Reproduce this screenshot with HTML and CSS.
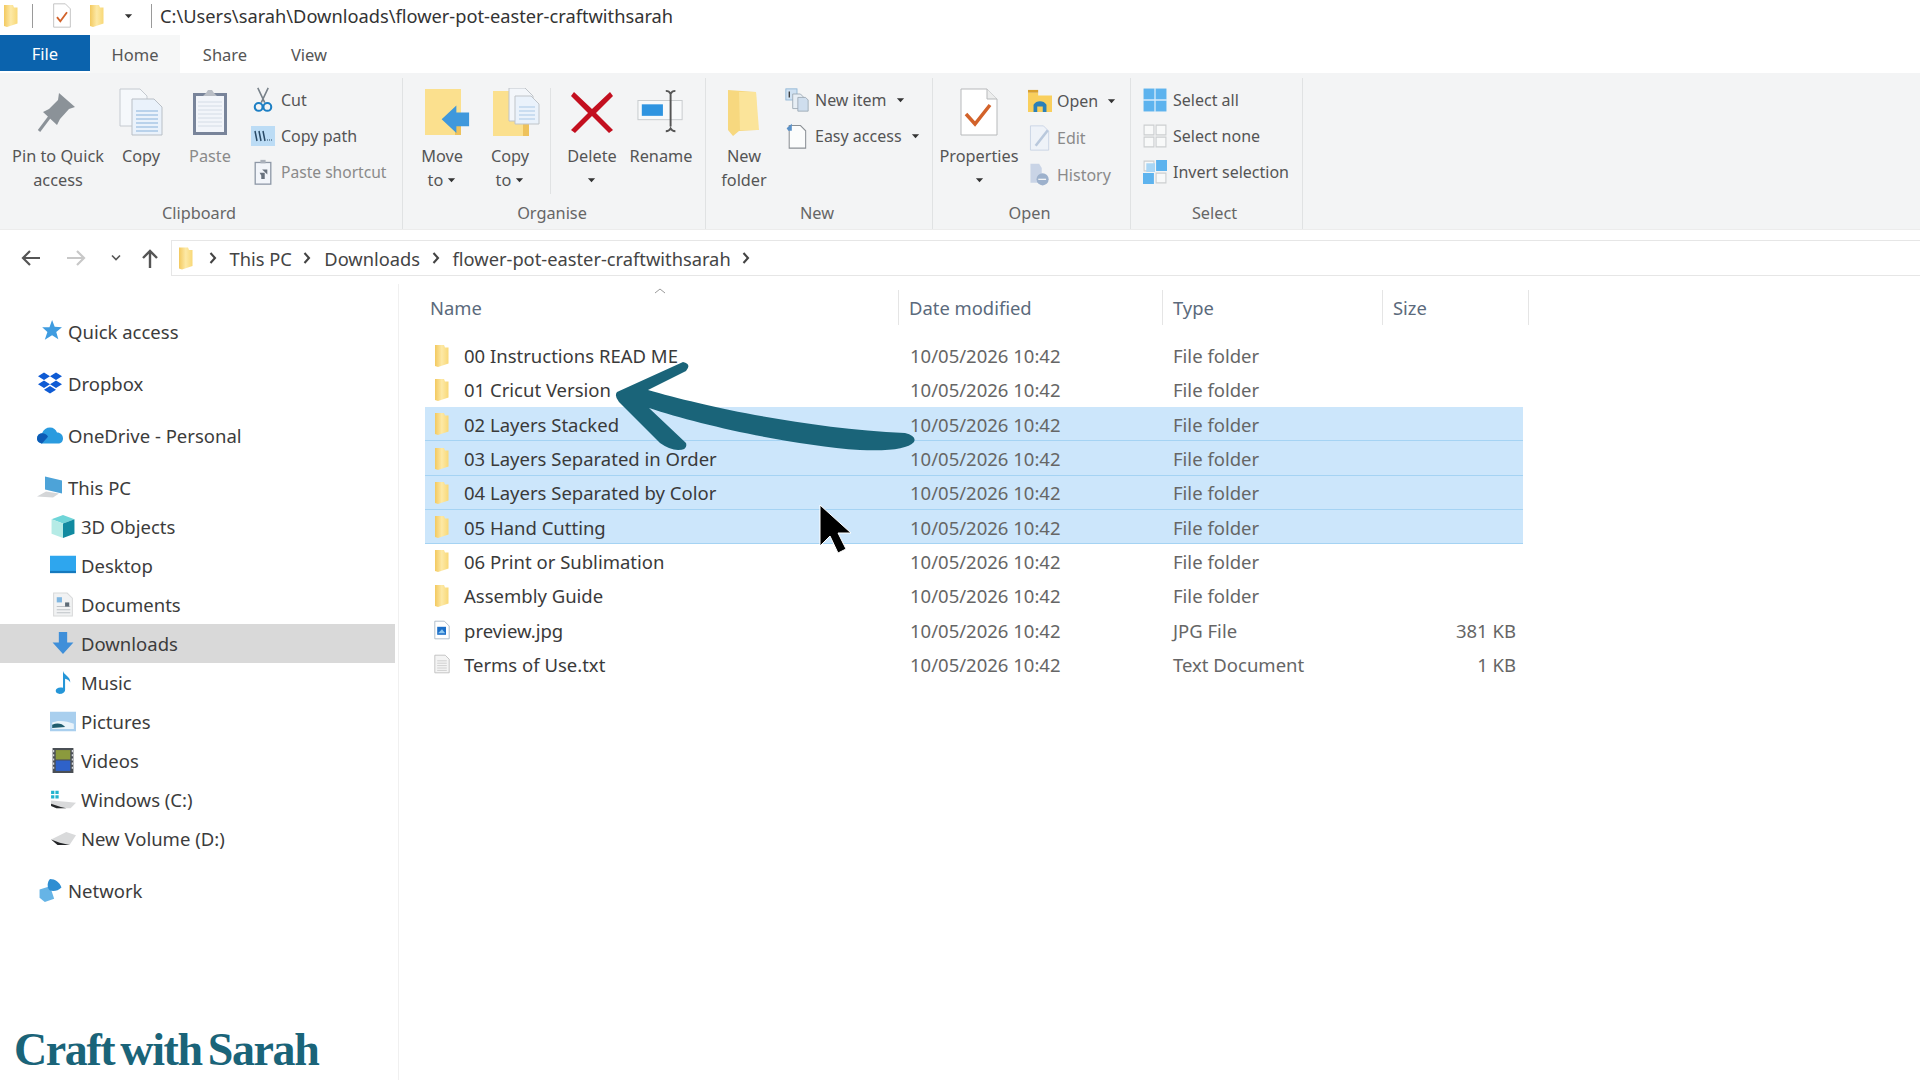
FILE: index.html
```html
<!DOCTYPE html>
<html lang="en">
<head>
  <meta charset="UTF-8" />
  <title>flower-pot-easter-craftwithsarah</title>
  <link rel="stylesheet" href="styles.css">
</head>
<body>

  <svg class="defs" width="0" height="0">
    <defs>
      <linearGradient id="g-folder" x1="0" x2="1" y1="0" y2="0">
        <stop offset="0" stop-color="#f3c95f"/><stop offset=".5" stop-color="#fde9a6"/><stop offset="1" stop-color="#f8d877"/>
      </linearGradient>
      <symbol id="i-folder" viewBox="0 0 16 24">
        <path d="M1 1h9l1 2.500h3.500v16L4 23l-3-1z" fill="url(#g-folder)"/>
      </symbol>
      <symbol id="i-down" viewBox="0 0 10 6"><path d="M1 1h8l-4 4.500z" fill="#333"/></symbol>
      <symbol id="i-check" viewBox="0 0 24 30">
        <path d="M2 1h14l6 6v22H2z" fill="#fff" stroke="#b9b9b9"/>
        <path d="M6 17l4 5 8-11" fill="none" stroke="#d2622a" stroke-width="2.200"/>
      </symbol>
      <symbol id="i-chev" viewBox="0 0 8 14"><path d="M1.500 2l4.500 5-4.500 5" fill="none" stroke="#444" stroke-width="2.100"/></symbol>
      <symbol id="i-star" viewBox="0 0 24 24"><path d="M14 1l2.500 6.500 7 .5-5.500 4.500 2 7-6-3.800-7 4.200 2.500-7.400-5-4.500h7z" fill="#3f9ce0"/></symbol>
      <symbol id="i-dropbox" viewBox="0 0 26 24">
        <path d="M7 1l6 3.800-6 3.800-6-3.800zM19 1l6 3.800-6 3.800-6-3.800zM7 9l6 3.800-6 3.800-6-3.800zM19 9l6 3.800-6 3.800-6-3.800zM13 14.500l6 3.700-6 3.800-6-3.800z" fill="#0f5bd4"/>
      </symbol>
      <symbol id="i-cloud" viewBox="0 0 26 18">
        <path d="M6 17C2 17 0 14.500 0 12c0-3 2-5 5-5.200C6.500 3 9.500 1 13 1c3.500 0 6 2 7 5 3.500 0 6 2.500 6 6 0 3-2 5-5 5z" fill="#2a9bdf"/>
        <path d="M6 17C2 17 0 14.500 0 12c0-3 2-5 5-5.200 3 0 5 1.500 6 3.500L5 17z" fill="#0d5bb5"/>
      </symbol>
      <symbol id="i-pc" viewBox="0 0 26 24">
        <path d="M8 1l17 4v13L8 14z" fill="#4da3d8"/>
        <path d="M0 21l9-5 13 2-6 4z" fill="#d4d6d8"/>
      </symbol>
      <symbol id="i-3d" viewBox="0 0 24 24">
        <path d="M12 1l11 4-11 4L1 5z" fill="#6fd5d8"/>
        <path d="M1 5l11 4v14L1 19z" fill="#b5ebe6"/>
        <path d="M12 9l11-4v14l-11 4z" fill="#118aa0"/>
      </symbol>
      <symbol id="i-desktop" viewBox="0 0 24 18">
        <rect width="24" height="16" fill="#2ea6ee"/><rect y="14" width="24" height="2" fill="#1679bd"/>
      </symbol>
      <symbol id="i-doc" viewBox="0 0 20 24">
        <path d="M1 1h13l5 5v17H1z" fill="#f1f2f3" stroke="#d8d9da"/>
        <path d="M4 5h5v5H4z" fill="#7fb6e0"/><path d="M4 14h13M4 17h13M4 20h13" stroke="#bfc3c7"/><path d="M12 10h4v4h-4z" fill="#5d6a75"/>
      </symbol>
      <symbol id="i-dl" viewBox="0 0 22 24"><path d="M7 1h8v10h6L11 22 1 11h6z" fill="#3f8fd9"/></symbol>
      <symbol id="i-music" viewBox="0 0 18 24">
        <path d="M9 1c1 4 7 5 7 11-1-2-3-3-5-3.500V19c0 2.500-2.500 4-5 4s-4-1.500-4-3c0-2.500 3-4 7-3z" fill="#2596d8"/>
      </symbol>
      <symbol id="i-pic" viewBox="0 0 24 18">
        <rect width="24" height="18" fill="#a9cfee"/><path d="M2 10c6-3 14-1 20 1v5H2z" fill="#e9f3fa"/><path d="M2 12c5-2 9-1 12 2l-12 1z" fill="#1f5c6e"/>
      </symbol>
      <symbol id="i-vid" viewBox="0 0 20 24">
        <rect width="20" height="24" fill="#4a4f55"/><rect x="3" y="2" width="14" height="9" fill="#8b9a3d"/><rect x="3" y="12" width="14" height="10" fill="#2f62c9"/>
        <path d="M1 2v20M19 2v20" stroke="#d5d8dc" stroke-width="1.200" stroke-dasharray="2 2"/>
      </symbol>
      <symbol id="i-win" viewBox="0 0 24 18">
        <path d="M1 1h3v3H1zM5 1h3v3H5zM1 5h3v3H1zM5 5h3v3H5z" fill="#23b4cf"/>
        <path d="M1 10l14 1 9 1-5 5H6l-5-2z" fill="#d9dadb"/><path d="M1 13l9 3 5 1H6l-5-2z" fill="#26282a"/>
      </symbol>
      <symbol id="i-vol" viewBox="0 0 24 14">
        <path d="M1 8l14-7 9 3-6 9H7z" fill="#d9dadb"/><path d="M1 8l8 3 9 2H7z" fill="#222426"/>
      </symbol>
      <symbol id="i-net" viewBox="0 0 24 24">
        <path d="M2 11l10-3 4 12-9 3-5-4z" fill="#66b4e6"/><path d="M12 1c5 0 9 3 11 8-3 3-7 4-11 3-3-2-3-8 0-11z" fill="#2e8ed2"/>
      </symbol>
      <symbol id="i-jpg" viewBox="0 0 20 24">
        <path d="M1 1h12l6 6v16H1z" fill="#fff" stroke="#9fb0bf"/><rect x="4" y="8" width="11" height="10" fill="#1c6fc8"/><path d="M5 16l5-5 4 5z" fill="#8fc8f0"/>
      </symbol>
      <symbol id="i-txt" viewBox="0 0 20 24">
        <path d="M1 1h13l5 5v17H1z" fill="#f4f4f4" stroke="#b9b9b9"/>
        <path d="M4 8h12M4 11h12M4 14h12M4 17h12M4 20h12" stroke="#c6c6c6"/>
      </symbol>

      <symbol id="r-pin" viewBox="0 0 48 48">
        <path d="M25 5l16 14-6 2-9 10-3 6-14-13 6-3 9-9z" fill="#8b9298"/>
        <path d="M17 27L5 43" stroke="#8b9298" stroke-width="3"/>
      </symbol>
      <symbol id="r-copy" viewBox="0 0 48 48">
        <path d="M3 1h20l7 7v30H3z" fill="#f5f8fb" stroke="#c5cad0"/>
        <path d="M15 11h22l8 8v28H15z" fill="#eaf2fb" stroke="#b9bfc6"/>
        <path d="M19 23h22M19 27h22M19 31h22M19 35h22M19 39h22M19 43h22" stroke="#a9c8e6" stroke-width="1.500"/>
      </symbol>
      <symbol id="r-paste" viewBox="0 0 48 48">
        <rect x="7" y="5" width="34" height="42" fill="#78849a"/><rect x="10" y="8" width="28" height="36" fill="#f2f5fa"/>
        <path d="M12 14h24M12 18h24M12 22h24M12 26h24M12 30h24M12 34h24M12 38h24" stroke="#d4dce6"/>
        <path d="M17 8l3-3 2-3h4l2 3 3 3z" fill="#b9bec6"/>
      </symbol>
      <symbol id="r-move" viewBox="0 0 48 48">
        <rect x="0" y="1" width="36" height="46" fill="#fbe08e"/><rect x="30" y="32" width="6" height="15" fill="#eec25c"/>
        <path d="M17 36l15-14v7h13v14H32v7z" fill="#3f98dc" transform="translate(0 -4) scale(.98)"/>
      </symbol>
      <symbol id="r-copyto" viewBox="0 0 48 48">
        <rect x="0" y="3" width="36" height="45" fill="#fbe08e"/><rect x="30" y="30" width="6" height="18" fill="#eec25c"/>
        <path d="M16 0h16l8 8v25H16z" fill="#f3f6fa" stroke="#bfc4c9"/>
        <path d="M22 8h16l8 8v20H22z" fill="#eaf2fb" stroke="#bfc4c9"/>
        <path d="M26 19h16M26 23h16M26 27h16M26 31h16" stroke="#a9c8e6"/>
      </symbol>
      <symbol id="r-x" viewBox="0 0 48 48">
        <path d="M6 4l18 17L42 4l3 4-17 17 17 17-4 3-17-17L7 45l-4-3 17-17L3 8z" fill="#c30f1f"/>
      </symbol>
      <symbol id="r-rename" viewBox="0 0 50 48">
        <rect x="1" y="12" width="46" height="20" fill="#f8f9fa" stroke="#c7cacd"/>
        <rect x="5" y="16" width="22" height="12" fill="#2f94e0"/>
        <path d="M30 2c2 0 4 1 5 3 1-2 3-3 5-3M35 5v34M30 44c2 0 4-1 5-3 1 2 3 3 5 3" fill="none" stroke="#555" stroke-width="2"/>
      </symbol>
      <symbol id="r-newfolder" viewBox="0 0 36 48">
        <path d="M2 2l28 2 1 38-18 1-6 5-5-6z" fill="#f7d87f"/>
        <path d="M13 4h17l3 38H14z" fill="#fbe49a"/>
      </symbol>
      <symbol id="r-props" viewBox="0 0 40 48">
        <path d="M2 1h26l10 10v36H2z" fill="#fff" stroke="#b7b9bb"/><path d="M28 1v10h10" fill="#eceded" stroke="#b7b9bb"/>
        <path d="M7 26l9 10L31 17" fill="none" stroke="#d2622a" stroke-width="3.500"/>
      </symbol>

      <symbol id="s-cut" viewBox="0 0 24 30">
        <path d="M6 1l8 17M18 1l-8 17" stroke="#778089" stroke-width="1.800" fill="none"/>
        <circle cx="7" cy="23" r="4.500" fill="none" stroke="#1d7fc4" stroke-width="2.400"/><circle cx="17" cy="23" r="4.500" fill="none" stroke="#1d7fc4" stroke-width="2.400"/>
      </symbol>
      <symbol id="s-path" viewBox="0 0 24 20">
        <rect width="24" height="20" fill="#bcdcf5"/><path d="M4 5l2 10M8 5l2 10M12 5l2 10" stroke="#2a4a66" stroke-width="1.500"/><path d="M16 14h1M18 14h1M20 14h1" stroke="#2a4a66"/>
      </symbol>
      <symbol id="s-short" viewBox="0 0 20 30">
        <rect x="1" y="4" width="18" height="25" fill="#f2f5fa" stroke="#8d97a6" stroke-width="1.500"/><path d="M7 1h6v4H7z" fill="#aab1bb"/><path d="M6 16h6v7H8v-4z" fill="#69727e"/><path d="M9 12h6v6z" fill="#69727e"/>
      </symbol>
      <symbol id="s-new" viewBox="0 0 28 28">
        <rect x="1" y="1" width="13" height="13" fill="#cfe1f2" stroke="#8fb5d6"/><path d="M5 4v7" stroke="#333" stroke-width="1.500"/>
        <path d="M9 7h9l4 4v13H9z" fill="#e7eef5" stroke="#9aa7b3"/><path d="M15 11h9l3 3v13H15z" fill="#cfdeee" stroke="#9aa7b3"/>
      </symbol>
      <symbol id="s-easy" viewBox="0 0 24 30">
        <path d="M3 3h13l6 6v20H3z" fill="#fbfcfc" stroke="#8b9095" stroke-width="1.200"/><path d="M0 6l6-5v8H2z" fill="#5a91c8"/>
      </symbol>
      <symbol id="s-open" viewBox="0 0 26 24">
        <path d="M0 3h11v3h15v18H0z" fill="#f9cf5d"/><rect y="0" width="11" height="3" fill="#d9a02e"/>
        <path d="M6 24v-8c3-5 11-5 14 0v8h-4v-6h-6v6z" fill="#2a7fb8"/>
      </symbol>
      <symbol id="s-edit" viewBox="0 0 24 30">
        <path d="M1 1h15l6 6v22H1z" fill="#eef2f8" stroke="#c6d2e3"/><path d="M7 24L21 6" stroke="#b9c8dc" stroke-width="3"/>
      </symbol>
      <symbol id="s-hist" viewBox="0 0 24 30">
        <path d="M1 2h10l3 5v17H1z" fill="#c9d4e6"/><circle cx="15" cy="20" r="7" fill="#9db1cc"/><path d="M10 20h9" stroke="#f3f4f5" stroke-width="1.500"/>
      </symbol>
      <symbol id="s-all" viewBox="0 0 22 22">
        <rect x=".5" y=".5" width="21" height="21" fill="#5db3ee"/><path d="M11 0v22M0 11h22" stroke="#d8ecfb" stroke-width="1.200"/>
      </symbol>
      <symbol id="s-none" viewBox="0 0 22 22">
        <path d="M1 1h9v9H1zM12 1h9v9h-9zM1 12h9v9H1zM12 12h9v9h-9z" fill="#f8f9f9" stroke="#ccced0"/>
      </symbol>
      <symbol id="s-inv" viewBox="0 0 22 22">
        <path d="M12 0h10v10H12zM0 12h10v10H0z" fill="#5db3ee"/><path d="M1 1h9v9H1zM12 12h9v9h-9z" fill="#f8f9f9" stroke="#ccced0"/><path d="M3 3h8v8H3z" fill="#a9d6f5"/>
      </symbol>
    </defs>
  </svg>

  <div class="titlebar">
    <svg class="qa-folder"><use href="#i-folder"/></svg>
    <span class="qa-sep"></span>
    <svg class="qa-check"><use href="#i-check"/></svg>
    <svg class="qa-folder2"><use href="#i-folder"/></svg>
    <svg class="qa-down"><use href="#i-down"/></svg>
    <span class="qa-sep2"></span>
    <span class="title-path">C:\Users\sarah\Downloads\flower-pot-easter-craftwithsarah</span>
  </div>

  <div class="tabs">
    <div class="tab tab-file">File</div>
    <div class="tab tab-home">Home</div>
    <div class="tab tab-share">Share</div>
    <div class="tab tab-view">View</div>
  </div>

  <div class="ribbon">
    <section class="group group-clipboard">
      <div class="group-body">
        <div class="big w-pin"><svg class="big-icon"><use href="#r-pin"/></svg><span>Pin to Quick<br>access</span></div>
        <div class="big w-copy"><svg class="big-icon"><use href="#r-copy"/></svg><span>Copy</span></div>
        <div class="big w-paste muted"><svg class="big-icon"><use href="#r-paste"/></svg><span>Paste</span></div>
        <div class="stack stack-clip">
          <div class="small"><svg><use href="#s-cut"/></svg>Cut</div>
          <div class="small"><svg><use href="#s-path"/></svg>Copy path</div>
          <div class="small muted"><svg><use href="#s-short"/></svg><span class="short-text">Paste shortcut</span></div>
        </div>
      </div>
      <div class="group-label">Clipboard</div>
    </section>

    <section class="group group-organise">
      <div class="group-body">
        <div class="big w-move"><svg class="big-icon"><use href="#r-move"/></svg><span>Move<br>to <svg class="caret"><use href="#i-down"/></svg></span></div>
        <div class="big w-copyto"><svg class="big-icon"><use href="#r-copyto"/></svg><span>Copy<br>to <svg class="caret"><use href="#i-down"/></svg></span></div>
        <span class="inner-sep"></span>
        <div class="big w-delete"><svg class="big-icon"><use href="#r-x"/></svg><span>Delete<br><svg class="caret"><use href="#i-down"/></svg></span></div>
        <div class="big w-rename"><svg class="big-icon"><use href="#r-rename"/></svg><span>Rename</span></div>
      </div>
      <div class="group-label">Organise</div>
    </section>

    <section class="group group-new">
      <div class="group-body">
        <div class="big w-newfolder"><svg class="big-icon"><use href="#r-newfolder"/></svg><span>New<br>folder</span></div>
        <div class="stack stack-new">
          <div class="small"><svg><use href="#s-new"/></svg>New item <svg class="caret"><use href="#i-down"/></svg></div>
          <div class="small"><svg><use href="#s-easy"/></svg>Easy access <svg class="caret"><use href="#i-down"/></svg></div>
        </div>
      </div>
      <div class="group-label">New</div>
    </section>

    <section class="group group-open">
      <div class="group-body">
        <div class="big w-props"><svg class="big-icon"><use href="#r-props"/></svg><span>Properties<br><svg class="caret"><use href="#i-down"/></svg></span></div>
        <div class="stack stack-open">
          <div class="small"><svg><use href="#s-open"/></svg>Open <svg class="caret"><use href="#i-down"/></svg></div>
          <div class="small muted"><svg><use href="#s-edit"/></svg>Edit</div>
          <div class="small muted"><svg><use href="#s-hist"/></svg>History</div>
        </div>
      </div>
      <div class="group-label">Open</div>
    </section>

    <section class="group group-select">
      <div class="group-body">
        <div class="stack stack-select">
          <div class="small"><svg><use href="#s-all"/></svg>Select all</div>
          <div class="small"><svg><use href="#s-none"/></svg>Select none</div>
          <div class="small"><svg><use href="#s-inv"/></svg>Invert selection</div>
        </div>
      </div>
      <div class="group-label">Select</div>
    </section>
  </div>

  <div class="navbar">
    <div class="nav-buttons">
      <svg class="nav-back" viewBox="0 0 20 18"><path d="M20 9H3M10 2L3 9l7 7" fill="none" stroke="#555" stroke-width="2.200"/></svg>
      <svg class="nav-fwd" viewBox="0 0 20 18"><path d="M0 9h17M10 2l7 7-7 7" fill="none" stroke="#c8c8c8" stroke-width="2.200"/></svg>
      <svg class="nav-drop" viewBox="0 0 12 8"><path d="M2 1.500l4 4 4-4" fill="none" stroke="#555" stroke-width="1.600"/></svg>
      <svg class="nav-up" viewBox="0 0 18 20"><path d="M9 20V3M2 10l7-7 7 7" fill="none" stroke="#555" stroke-width="2.400"/></svg>
    </div>
    <div class="address">
      <svg class="addr-folder"><use href="#i-folder"/></svg>
      <svg class="chev"><use href="#i-chev"/></svg><span>This PC</span>
      <svg class="chev"><use href="#i-chev"/></svg><span>Downloads</span>
      <svg class="chev"><use href="#i-chev"/></svg><span>flower-pot-easter-craftwithsarah</span>
      <svg class="chev"><use href="#i-chev"/></svg>
    </div>
  </div>

  <div class="content">
    <aside class="sidebar">
      <ul class="tree">
        <li class="lvl1"><svg><use href="#i-star"/></svg>Quick access</li>
        <li class="lvl1 gap"><svg><use href="#i-dropbox"/></svg>Dropbox</li>
        <li class="lvl1 gap"><svg><use href="#i-cloud"/></svg>OneDrive - Personal</li>
        <li class="lvl1 gap"><svg><use href="#i-pc"/></svg>This PC</li>
        <li class="lvl2"><svg><use href="#i-3d"/></svg>3D Objects</li>
        <li class="lvl2"><svg><use href="#i-desktop"/></svg>Desktop</li>
        <li class="lvl2"><svg><use href="#i-doc"/></svg>Documents</li>
        <li class="lvl2 current"><svg><use href="#i-dl"/></svg>Downloads</li>
        <li class="lvl2"><svg><use href="#i-music"/></svg>Music</li>
        <li class="lvl2"><svg><use href="#i-pic"/></svg>Pictures</li>
        <li class="lvl2"><svg><use href="#i-vid"/></svg>Videos</li>
        <li class="lvl2"><svg><use href="#i-win"/></svg>Windows (C:)</li>
        <li class="lvl2"><svg><use href="#i-vol"/></svg>New Volume (D:)</li>
        <li class="lvl1 gap"><svg><use href="#i-net"/></svg>Network</li>
      </ul>
    </aside>

    <main class="files">
      <div class="file-head">
        <div class="col-name">Name<svg class="sort" viewBox="0 0 12 6"><path d="M1 5l5-4 5 4" fill="none" stroke="#9a9a9a"/></svg></div>
        <div class="col-date">Date modified</div>
        <div class="col-type">Type</div>
        <div class="col-size">Size</div>
      </div>
      <div class="row"><svg><use href="#i-folder"/></svg><span class="name">00 Instructions READ ME</span><span>10/05/2026 10:42</span><span>File folder</span><span class="size"></span></div>
      <div class="row"><svg><use href="#i-folder"/></svg><span class="name">01 Cricut Version</span><span>10/05/2026 10:42</span><span>File folder</span><span class="size"></span></div>
      <div class="row selected"><svg><use href="#i-folder"/></svg><span class="name">02 Layers Stacked</span><span>10/05/2026 10:42</span><span>File folder</span><span class="size"></span></div>
      <div class="row selected"><svg><use href="#i-folder"/></svg><span class="name">03 Layers Separated in Order</span><span>10/05/2026 10:42</span><span>File folder</span><span class="size"></span></div>
      <div class="row selected"><svg><use href="#i-folder"/></svg><span class="name">04 Layers Separated by Color</span><span>10/05/2026 10:42</span><span>File folder</span><span class="size"></span></div>
      <div class="row selected"><svg><use href="#i-folder"/></svg><span class="name">05 Hand Cutting</span><span>10/05/2026 10:42</span><span>File folder</span><span class="size"></span></div>
      <div class="row"><svg><use href="#i-folder"/></svg><span class="name">06 Print or Sublimation</span><span>10/05/2026 10:42</span><span>File folder</span><span class="size"></span></div>
      <div class="row"><svg><use href="#i-folder"/></svg><span class="name">Assembly Guide</span><span>10/05/2026 10:42</span><span>File folder</span><span class="size"></span></div>
      <div class="row"><svg><use href="#i-jpg"/></svg><span class="name">preview.jpg</span><span>10/05/2026 10:42</span><span>JPG File</span><span class="size">381 KB</span></div>
      <div class="row"><svg><use href="#i-txt"/></svg><span class="name">Terms of Use.txt</span><span>10/05/2026 10:42</span><span>Text Document</span><span class="size">1 KB</span></div>
    </main>
  </div>

  <!-- drawn on top of the window -->
  <svg class="overlay" viewBox="0 0 1920 1080">
    <path d="M617 392 L683 362 Q692 364 686 371 L648 390 C700 405 800 428 905 433 Q917 436 914 442 Q905 452 860 450 C790 445 700 425 649 408 L686 443 Q688 450 678 450 Q670 450 660 443 L619 402 Q614 396 617 392Z" fill="#1a6479"/>
    <path d="M820 505 L820 546 L830 536 L838 553 L846 549 L838 533 L851 533Z" fill="#000" stroke="#fff" stroke-width="1"/>
  </svg>
  <div class="logo">Craft with Sarah</div>

</body>
</html>
```

FILE: styles.css
```css
* {
  box-sizing: border-box;
}
html, body {
  height: 100%;
}
body {
  margin: 0;
  width: 1920px;
  height: 1080px;
  overflow: hidden;
  position: relative;
  background: #fff;
  color: #3a3a3a;
  font-family: "Noto Sans", "Open Sans", sans-serif;
  font-size: 17px;
}
.defs {
  position: absolute;
}

/* title bar */
.titlebar {
  height: 35px;
  padding-bottom: 4px;
  display: flex;
  align-items: center;
}
.qa-folder {
  width: 16px;
  height: 24px;
  margin-left: 3px;
}
.qa-sep {
  width: 1px;
  height: 24px;
  margin-left: 13px;
  background: #9a9a9a;
}
.qa-check {
  width: 20px;
  height: 25px;
  margin-left: 19px;
}
.qa-folder2 {
  width: 16px;
  height: 26px;
  margin-left: 17px;
}
.qa-down {
  width: 9px;
  height: 6px;
  margin-left: 19px;
}
.qa-sep2 {
  width: 1px;
  height: 24px;
  margin-left: 18px;
  background: #9a9a9a;
}
.title-path {
  margin-left: 8px;
  font-size: 18.250px;
  color: #333;
}

/* tabs */
.tabs {
  height: 38px;
  display: flex;
}
.tab {
  display: flex;
  align-items: center;
  justify-content: center;
  font-size: 16.500px;
  color: #555;
}
.tab-file {
  width: 90px;
  height: 36px;
  background: #0b63ad;
  color: #fff;
}
.tab-home {
  width: 90px;
  background: #f6f7f7;
  color: #555;
}
.tab-share {
  width: 90px;
}
.tab-view {
  width: 78px;
}

/* ribbon */
.ribbon {
  height: 157px;
  display: flex;
  background: #f3f4f5;
  border-bottom: 1px solid #ececec;
  font-size: 16.300px;
  color: #555;
}
.group {
  display: flex;
  flex-direction: column;
  margin-top: 5px;
  height: 151px;
  border-right: 1px solid #e0e2e3;
}
.group-clipboard { width: 403px; }
.group-organise { width: 303px; }
.group-new { width: 227px; }
.group-open { width: 198px; }
.group-select { width: 172px; }
.group-body {
  flex: 1;
  display: flex;
  padding-top: 10px;
  min-height: 0;
}
.group-label {
  height: 30px;
  padding-right: 4px;
  text-align: center;
  color: #666;
  line-height: 28px;
}
.big {
  display: flex;
  flex-direction: column;
  align-items: center;
  text-align: center;
  line-height: 24px;
  flex: none;
}
.big-icon {
  width: 48px;
  height: 48px;
  margin-bottom: 8px;
}
.muted {
  color: #8a8a8a;
}
.caret {
  width: 9px;
  height: 6px;
  vertical-align: 3px;
}
.w-pin { width: 96px; margin-left: 10px; }
.w-copy { width: 70px; }
.w-paste { width: 68px; }
.w-move { width: 68px; margin-left: 5px; }
.w-move .big-icon { margin-left: 14px; }
.w-copyto { width: 68px; }
.w-copyto .big-icon { margin-left: 14px; }
.inner-sep {
  width: 1px;
  height: 106px;
  margin: 0 5px 0 6px;
  background: #e0e2e3;
}
.w-delete { width: 70px; margin-left: 1px; }
.w-rename { width: 68px; }
.w-newfolder { width: 60px; margin-left: 8px; }
.w-props { width: 88px; margin-left: 2px; }

.stack {
  display: flex;
  flex-direction: column;
  margin-top: -6px;
  font-size: 16px;
}
.small {
  height: 36px;
  display: flex;
  align-items: center;
  white-space: pre;
}
.small > svg:first-child {
  width: 24px;
  height: 26px;
  margin-right: 6px;
  flex: none;
}
.small .caret {
  margin-left: 5px;
  align-self: center;
}
.short-text {
  font-size: 15.600px;
}
.stack-clip { margin-left: 7px; }
.stack-new { margin-left: 11px; }
.stack-open { margin-left: 5px; }
.stack-open .small { height: 37px; }
.stack-open .small > svg:first-child { margin-right: 5px; }
.stack-select { margin-left: 12px; }

/* address row */
.navbar {
  height: 54px;
  display: flex;
  padding-top: 10px;
}
.nav-buttons {
  width: 171px;
  height: 36px;
  display: flex;
  align-items: center;
  padding-left: 20px;
}
.nav-back, .nav-fwd {
  width: 20px;
  height: 18px;
}
.nav-fwd {
  margin-left: 27px;
}
.nav-drop {
  width: 12px;
  height: 8px;
  margin-left: 23px;
}
.nav-up {
  width: 18px;
  height: 20px;
  margin-left: 19px;
}
.address {
  flex: 1;
  height: 36px;
  display: flex;
  align-items: center;
  border: 1px solid #e6e6e6;
  border-right: 0;
  font-size: 18.300px;
  color: #444;
}
.addr-folder {
  width: 16px;
  height: 25px;
  margin: 0 3px 0 6px;
}
.chev {
  width: 8px;
  height: 14px;
  margin: 0 13px 0 11.500px;
}

/* main area */
.content {
  height: 796px;
  display: flex;
}
.sidebar {
  width: 399px;
  padding: 28px 3px 0 0;
  border-right: 1px solid #f0f0f0;
}
.tree {
  list-style: none;
  margin: 0;
  padding: 0;
  font-size: 18.500px;
  color: #3c3c3c;
}
.tree li {
  height: 39px;
  display: flex;
  align-items: center;
}
.tree svg {
  width: 26px;
  height: 25px;
  margin-right: 5px;
}
.lvl1 {
  padding-left: 37px;
}
.lvl2 {
  padding-left: 50px;
}
.tree .gap {
  margin-top: 13px;
}
.tree .current {
  background: #d9d9d9;
}

.files {
  flex: 1;
  padding: 6px 0 0 26px;
  font-size: 18.500px;
  color: #666;
}
.file-head {
  width: 1105px;
  height: 35px;
  margin-bottom: 13.500px;
  display: grid;
  grid-template-columns: 474px 264px 220px 146px;
  color: #5b6a7c;
  font-size: 18.400px;
}
.file-head div {
  display: flex;
  align-items: center;
  padding-left: 5px;
  border-right: 1px solid #e5e5e5;
  position: relative;
}
.file-head .col-date, .file-head .col-type, .file-head .col-size {
  padding-left: 10px;
}
.sort {
  position: absolute;
  left: 229px;
  top: -2px;
  width: 12px;
  height: 6px;
}
.row {
  width: 1098px;
  height: 34.300px;
  display: grid;
  grid-template-columns: 39px 446px 263px 210px 133px;
  align-items: center;
}
.row svg {
  width: 16px;
  height: 24px;
  margin-left: 9px;
}
.row .name {
  color: #3a3a3a;
}
.row .size {
  text-align: right;
}
.selected {
  background: #cce6fb;
  box-shadow: inset 0 -1px 0 #a5d3f3;
}

/* overlays */
.overlay {
  position: absolute;
  left: 0;
  top: 0;
  width: 1920px;
  height: 1080px;
  pointer-events: none;
}
.logo {
  position: absolute;
  left: 14px;
  bottom: 4px;
  font-family: "Liberation Serif", serif;
  font-weight: bold;
  font-size: 46px;
  letter-spacing: -1.400px;
  word-spacing: -4px;
  color: #1a6479;
  white-space: nowrap;
}
```
